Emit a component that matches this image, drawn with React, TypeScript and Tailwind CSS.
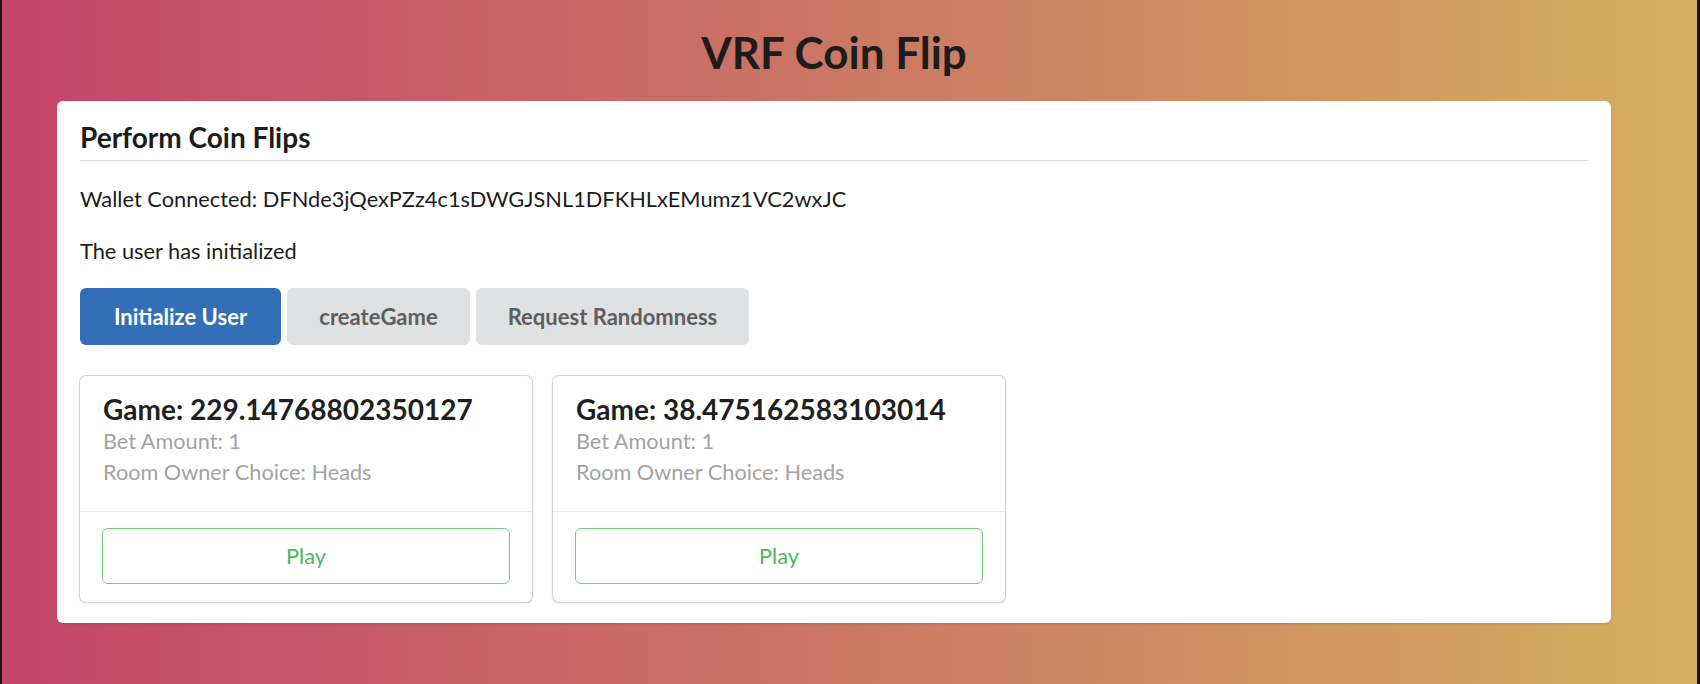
import React from "react";

const games = [
  { id: "229.14768802350127", bet: 1, choice: "Heads" },
  { id: "38.475162583103014", bet: 1, choice: "Heads" },
];

function GameCard({ id, bet, choice }: { id: string; bet: number; choice: string }) {
  return (
    <div className="w-[452px] rounded-[6px] bg-white shadow-[0_1px_3px_0_#d4d4d5,0_0_0_1px_#d4d4d5]">
      <div className="px-[23px] pt-[16px] pb-[23px] border-b border-[#ececec]">
        <div className="text-[28px] leading-[34px] font-bold text-[#1f1f1f]">Game: {id}</div>
        <div className="text-[21.7px] leading-[31px] text-[#a3a3a3]">Bet Amount: {bet}</div>
        <div className="text-[21.7px] leading-[31px] text-[#a3a3a3]">Room Owner Choice: {choice}</div>
      </div>
      <div className="px-[22px] pt-[16px] pb-[18px]">
        <button className="w-full h-[56px] rounded-[6px] border-[1.5px] border-[#74cc80] bg-white text-[21.7px] text-[#4cb85c]">
          Play
        </button>
      </div>
    </div>
  );
}

export default function App() {
  return (
    <div
      className="w-full h-[684px] flex border-l-2 border-r-[3px] border-[#161616] bg-[linear-gradient(to_right,#c4446a,#cb7864_50%,#d4af5e)]"
      style={{ fontFamily: "Lato, 'Noto Sans', sans-serif" }}
    >
      <div className="flex flex-col pl-[55px] pr-[86px] w-full">
        <h1 className="pt-[24px] h-[80px] text-center text-[44px] leading-[56px] font-bold text-[#1c1c1c]">
          VRF Coin Flip
        </h1>
        <div className="mt-[21px] w-[1554px] rounded-[6px] bg-white px-[23px] pt-[18px] pb-[21px] shadow-[0_1px_2px_0_rgba(34,36,38,0.15)]">
          <h3 className="text-[28px] leading-[36px] font-bold text-[#1c1c1c] pb-[5px] border-b border-[#dcdcdc]">
            Perform Coin Flips
          </h3>
          <p className="mt-[24px] text-[21.8px] leading-[28px] text-[#1c1c1c]">
            Wallet Connected: DFNde3jQexPZz4c1sDWGJSNL1DFKHLxEMumz1VC2wxJC
          </p>
          <p className="mt-[24px] text-[21.8px] leading-[28px] text-[#1c1c1c]">The user has initialized</p>
          <div className="mt-[23px] flex gap-[6px]">
            <button className="h-[57px] w-[201px] rounded-[6px] bg-[#326fb6] text-[22px] font-bold text-white">
              Initialize User
            </button>
            <button className="h-[57px] w-[183px] rounded-[6px] bg-[#e0e1e2] text-[22px] font-bold text-[#5e5e5e]">
              createGame
            </button>
            <button className="h-[57px] w-[273px] rounded-[6px] bg-[#e0e1e2] text-[22px] font-bold text-[#5e5e5e]">
              Request Randomness
            </button>
          </div>
          <div className="mt-[31px] flex gap-[21px]">
            {games.map((g) => (
              <GameCard key={g.id} {...g} />
            ))}
          </div>
        </div>
      </div>
    </div>
  );
}
